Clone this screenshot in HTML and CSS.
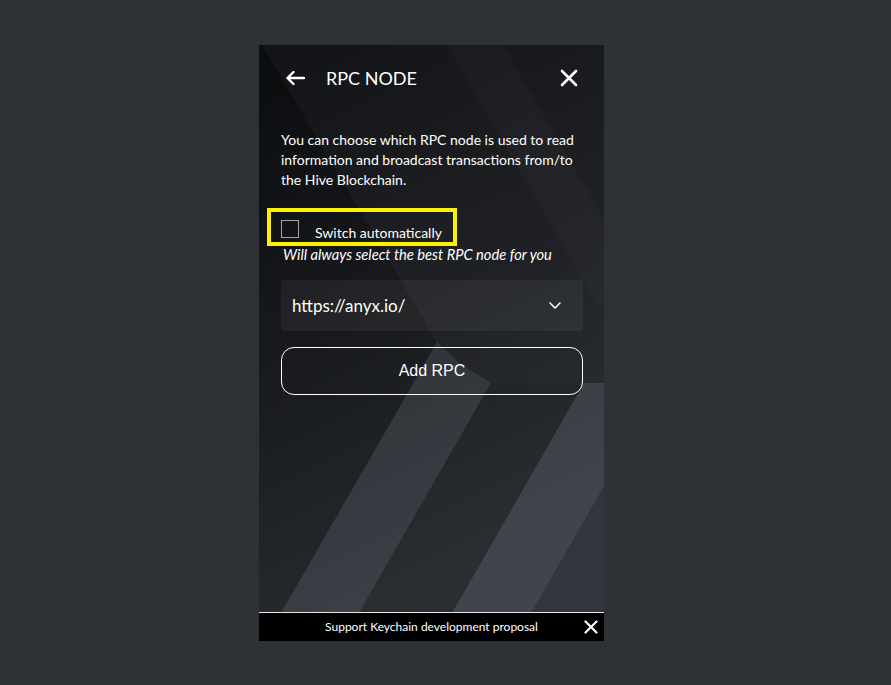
FILE: index.html
```html
<!DOCTYPE html>
<html>
<head>
<meta charset="utf-8">
<link rel="stylesheet" href="styles.css">
</head>
<body>
<div class="panel">
  <svg class="bg" width="345" height="568" viewBox="0 0 345 568" preserveAspectRatio="none">
    <defs>
      <linearGradient id="base" x1="0" y1="0" x2="0.3" y2="1">
        <stop offset="0" stop-color="#0b0c0e"/>
        <stop offset="0.5" stop-color="#17191c"/>
        <stop offset="1" stop-color="#272a2f"/>
      </linearGradient>
    </defs>
    <rect x="0" y="0" width="345" height="568" fill="url(#base)"/>
    <polygon points="22,568 178,297 3,0 345,0 345,338 232,338 100,568" fill="#c0cadb" fill-opacity="0.04"/>
    <polygon points="188,0 244,0 345,175 345,260 338,260" fill="#c0cadb" fill-opacity="0.03"/>
    <polygon points="22,568 100,568 232,338 200,318 178,297" fill="#c0cadb" fill-opacity="0.1"/>
    <polygon points="193,568 272,568 345,441 345,338 325,338" fill="#c0cadb" fill-opacity="0.17"/>
    <polygon points="272,568 345,568 345,441" fill="#c0cadb" fill-opacity="0.08"/>
    <polygon points="100,568 193,568 325,338 232,338" fill="#c0cadb" fill-opacity="0.02"/>
  </svg>

  <div class="content">
    <div class="top-bar">
      <svg class="back" width="20" height="16" viewBox="0 0 20 16">
        <path d="M19 8H2.5M8.5 2L2.5 8L8.5 14" fill="none" stroke="#fff" stroke-width="2.4" stroke-linecap="round" stroke-linejoin="round"/>
      </svg>
      <h1 class="title">RPC NODE</h1>
      <svg class="close" width="18" height="18" viewBox="0 0 18 18">
        <path d="M2 2L16 16M16 2L2 16" fill="none" stroke="#fff" stroke-width="2.6" stroke-linecap="round"/>
      </svg>
    </div>

    <p class="intro">You can choose which RPC node is used to read<br>information and broadcast transactions from/to<br>the Hive Blockchain.</p>

    <div class="check-row">
      <span class="box"></span>
      <span class="check-label">Switch automatically</span>
    </div>
    <div class="hint">Will always select the best RPC node for you</div>

    <div class="select">
      <span class="select-value">https://anyx.io/</span>
      <svg class="chev" width="12" height="7" viewBox="0 0 12 7">
        <path d="M1 1L6 6L11 1" fill="none" stroke="#fff" stroke-width="1.5" stroke-linecap="round" stroke-linejoin="round"/>
      </svg>
    </div>

    <button class="add-btn">Add RPC</button>
  </div>

  <div class="footer">
    <span class="footer-text">Support Keychain development proposal</span>
    <svg class="footer-close" width="14" height="14" viewBox="0 0 14 14">
      <path d="M1.5 1.5L12.5 12.5M12.5 1.5L1.5 12.5" fill="none" stroke="#fff" stroke-width="2.2" stroke-linecap="round"/>
    </svg>
  </div>

  <div class="highlight"></div>
</div>
</body>
</html>
```

FILE: styles.css
```css
html, body {
  margin: 0;
  padding: 0;
}
body {
  background: #2e3135;
  width: 891px;
  height: 685px;
  overflow: hidden;
  font-family: Lato, "Noto Sans", sans-serif;
  color: #fff;
}
.panel {
  position: relative;
  margin: 45px 0 0 259px;
  width: 345px;
  height: 596px;
  display: flex;
  flex-direction: column;
  background: #111214;
}
.bg {
  position: absolute;
  left: 0;
  top: 0;
  z-index: 0;
}
.content {
  position: relative;
  z-index: 1;
  flex: 1;
  padding: 21px 21px 0 22px;
  display: flex;
  flex-direction: column;
}
.top-bar {
  display: flex;
  align-items: center;
  height: 24px;
}
.back {
  margin-left: 4px;
  display: block;
}
.title {
  margin: 0 0 0 21px;
  font-size: 18px;
  font-weight: 400;
  line-height: 24px;
  flex: 1;
  letter-spacing: 0;
}
.close {
  margin-right: 5px;
  display: block;
}
.intro {
  margin: 40px 0 0 0;
  font-size: 14px;
  line-height: 20px;
  white-space: nowrap;
}
.check-row {
  margin-top: 30px;
  display: flex;
  align-items: flex-start;
  height: 22px;
}
.box {
  width: 16px;
  height: 16px;
  border: 1px solid #a5a5a5;
  box-sizing: content-box;
  flex: none;
}
.check-label {
  margin: 4px 0 0 16px;
  font-size: 14px;
  line-height: 18px;
}
.hint {
  margin-top: 3px;
  font-size: 14.7px;
  font-style: italic;
  line-height: 18px;
  margin-left: 2px;
  white-space: nowrap;
}
.select {
  margin-top: 17px;
  height: 51px;
  border-radius: 3px;
  background: rgba(255, 255, 255, 0.05);
  display: flex;
  align-items: center;
  justify-content: space-between;
  padding: 0 22px 0 11px;
}
.select-value {
  font-size: 17px;
  line-height: 20px;
}
.chev {
  display: block;
}
.add-btn {
  margin-top: 16px;
  height: 48px;
  border: 1px solid #fff;
  border-radius: 13px;
  background: transparent;
  color: #fff;
  font-family: "Liberation Sans", Arial, sans-serif;
  font-size: 16px;
  padding: 0;
}
.footer {
  position: relative;
  z-index: 1;
  height: 28px;
  border-top: 1px solid #e6e6e6;
  background: #000;
  display: flex;
  align-items: center;
  justify-content: center;
}
.footer-text {
  font-size: 12px;
  line-height: 16px;
}
.footer-close {
  position: absolute;
  right: 6px;
  top: 7px;
}
.highlight {
  position: absolute;
  left: 8px;
  top: 163px;
  width: 182px;
  height: 30px;
  border: 4px solid #fff200;
  z-index: 2;
}
```
